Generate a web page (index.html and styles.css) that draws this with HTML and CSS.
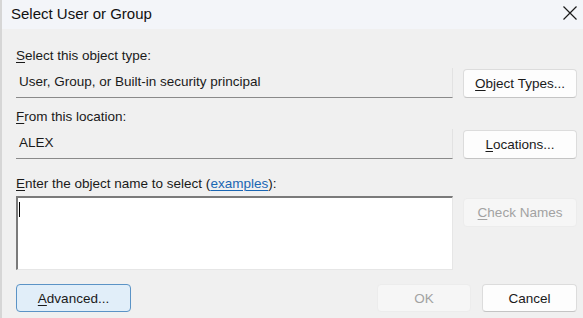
FILE: index.html
```html
<!DOCTYPE html>
<html>
<head>
<meta charset="utf-8">
<link rel="stylesheet" href="styles.css">
</head>
<body>
<div class="window">
  <div class="titlebar">
    <span class="title">Select User or Group</span>
    <svg class="close" width="16" height="16" viewBox="0 0 16 16"><path d="M1.5 1.5 L14.5 14.5 M14.5 1.5 L1.5 14.5" stroke="#1a1a1a" stroke-width="1.2" fill="none"/></svg>
  </div>
  <div class="content">
    <div class="label l1"><u>S</u>elect this object type:</div>
    <div class="row r1">
      <div class="field">User, Group, or Built-in security principal</div>
      <button class="btn"><u>O</u>bject Types...</button>
    </div>
    <div class="label l2"><u>F</u>rom this location:</div>
    <div class="row r2">
      <div class="field">ALEX</div>
      <button class="btn"><u>L</u>ocations...</button>
    </div>
    <div class="label l3"><u>E</u>nter the object name to select (<a class="link">examples</a>):</div>
    <div class="row r3">
      <div class="textarea"><span class="caret"></span></div>
      <button class="btn disabled"><u>C</u>heck Names</button>
    </div>
    <div class="footer">
      <button class="btn advanced"><u>A</u>dvanced...</button>
      <div class="spacer"></div>
      <button class="btn disabled ok">OK</button>
      <button class="btn cancel">Cancel</button>
    </div>
  </div>
</div>
</body>
</html>
```
FILE: styles.css
```css
* { box-sizing: border-box; }
html, body { margin: 0; padding: 0; }
body {
  width: 583px;
  height: 318px;
  overflow: hidden;
  font-family: "Liberation Sans", Arial, sans-serif;
  font-size: 13.5px;
  color: #1a1a1a;
}
.window {
  width: 583px;
  height: 318px;
  background: #f0f0f0;
  border-left: 2px solid #d6d6d6;
  display: flex;
  flex-direction: column;
}
.titlebar {
  height: 29px;
  background: #f3f5f9;
  display: flex;
  align-items: center;
  padding-left: 9px;
  padding-right: 5px;
}
.title {
  font-size: 15px;
  flex: 1;
  color: #111;
  margin-top: -3px;
}
.close { margin-top: -4px; }
.content {
  padding: 0 6px 0 14px;
  display: flex;
  flex-direction: column;
}
.label { line-height: 16px; height: 16px; }
.l1 { margin-top: 19px; }
.l2 { margin-top: 11px; }
.l3 { margin-top: 17px; }
u { text-decoration-thickness: 1px; text-underline-offset: 2px; }
.link { color: #1a66b3; text-decoration: underline; text-decoration-thickness: 1px; text-underline-offset: 2px; }
.row {
  display: flex;
  align-items: flex-end;
  gap: 10px;
}
.r1, .r2 { margin-top: 4px; height: 30px; }
.field {
  width: 437px;
  height: 30px;
  padding: 0 3px;
  line-height: 28px;
  border-right: 1px solid #e2e2e2;
  border-bottom: 1px solid #8a8a8a;
  white-space: nowrap;
}
.btn {
  font-family: inherit;
  font-size: 13.5px;
  color: #1a1a1a;
  width: 114px;
  height: 29px;
  background: #fdfdfd;
  border: 1px solid #dcdcdc;
  border-bottom-color: #c4c4c4;
  border-radius: 4px;
  padding: 0;
  margin: 0;
}
.btn.disabled {
  background: #f6f6f6;
  border-color: #ececec;
  color: #a2a2a2;
}
.r3 {
  margin-top: 4px;
  align-items: flex-start;
}
.r3 .btn { margin-top: 2px; }
.textarea {
  width: 437px;
  height: 74px;
  background: #fff;
  border-top: 2px solid #7a7a7a;
  border-left: 2px solid #7a7a7a;
  border-right: 1px solid #e6e6e6;
  border-bottom: 1px solid #e6e6e6;
  padding: 4px 0 0 1px;
}
.caret {
  display: block;
  width: 1px;
  height: 15px;
  background: #000;
}
.footer {
  display: flex;
  margin-top: 14px;
  height: 28px;
}
.footer .btn { height: 28px; }
.advanced {
  width: 115px;
  background: #e1eef9;
  border: 1px solid #5b93c6;
  border-radius: 4px;
}
.spacer { flex: 1; }
.ok { width: 94px; }
.cancel { width: 95px; margin-left: 11px; }
```
